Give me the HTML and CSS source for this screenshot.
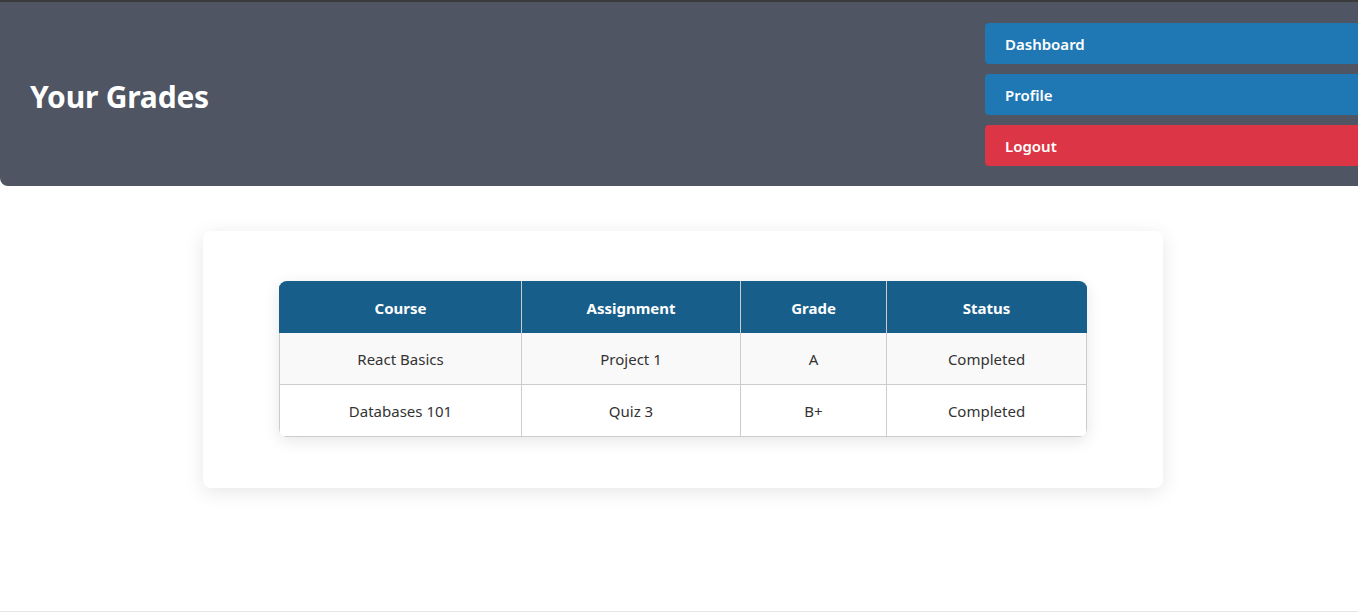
FILE: index.html
```html
<!DOCTYPE html>
<html lang="en">
<head>
<meta charset="utf-8">
<title>Your Grades</title>
<link rel="stylesheet" href="styles.css">
</head>
<body>
<div class="page">
  <header class="topbar">
    <h1 class="title">Your Grades</h1>
    <nav class="nav">
      <a class="nav-btn" href="#">Dashboard</a>
      <a class="nav-btn" href="#">Profile</a>
      <a class="nav-btn danger" href="#">Logout</a>
    </nav>
  </header>
  <main class="content">
    <section class="card">
      <table class="grades">
        <thead>
          <tr><th class="c1">Course</th><th class="c2">Assignment</th><th class="c3">Grade</th><th class="c4">Status</th></tr>
        </thead>
        <tbody>
          <tr class="odd"><td>React Basics</td><td>Project 1</td><td>A</td><td>Completed</td></tr>
          <tr><td>Databases 101</td><td>Quiz 3</td><td>B+</td><td>Completed</td></tr>
        </tbody>
      </table>
    </section>
  </main>
</div>
</body>
</html>
```
FILE: styles.css
```css
html, body {
  margin: 0;
  padding: 0;
  background: #fff;
  overflow: hidden;
}
body {
  font-family: "Noto Sans", "Open Sans", sans-serif;
  color: #333;
}
.page {
  min-height: 612px;
  box-sizing: border-box;
  border-top: 2px solid #3a3a3a;
  border-bottom: 1px solid #e6e6e6;
}
.topbar {
  display: flex;
  align-items: center;
  height: 184px;
  box-sizing: border-box;
  padding: 0 0 0 30px;
  background: #4f5562;
  border-bottom-left-radius: 8px;
  overflow: hidden;
}
.title {
  flex: 1;
  margin: 0;
  padding-top: 4px;
  color: #fff;
  font-size: 30px;
  font-weight: 700;
  letter-spacing: -0.2px;
}
.nav {
  flex-shrink: 0;
  width: 400px;
  margin-right: -27px;
  display: flex;
  flex-direction: column;
  gap: 10px;
}
.nav-btn {
  display: block;
  height: 41px;
  line-height: 42px;
  padding-left: 20px;
  border-radius: 4px;
  background: #1f77b4;
  color: #fff;
  text-decoration: none;
  font-size: 15px;
  font-weight: 600;
}
.nav-btn.danger {
  background: #dc3545;
}
.content {
  display: flex;
  justify-content: center;
  padding-top: 45px;
  padding-left: 8px;
}
.card {
  width: 960px;
  box-sizing: border-box;
  padding: 50px 76px 51px;
  background: #fff;
  border-radius: 8px;
  box-shadow: 0 4px 20px rgba(0, 0, 0, 0.1);
}
.grades {
  width: 100%;
  border-collapse: separate;
  border-spacing: 0;
  border-radius: 8px;
  overflow: hidden;
  box-shadow: 0 4px 16px rgba(0, 0, 0, 0.1);
  font-size: 15px;
}
.grades th, .grades td {
  height: 52px;
  box-sizing: border-box;
  padding: 1px 8px 0;
  text-align: center;
  border-right: 1px solid #cccccc;
  border-bottom: 1px solid #cccccc;
}
.grades td {
  color: #333;
}
.grades tr > :first-child {
  border-left: 1px solid #cccccc;
}
.grades th {
  background: #175e8b;
  color: #fff;
  font-weight: 700;
  border-bottom: none;
  height: 52px;
}
.grades th:first-child { border-left-color: #175e8b; }
.grades th:last-child { border-right-color: #175e8b; }
.grades tr.odd td {
  background: #f9f9f9;
}
.c1 { width: 243px; }
.c2 { width: 219px; }
.c3 { width: 146px; }
.c4 { width: 200px; }
```
